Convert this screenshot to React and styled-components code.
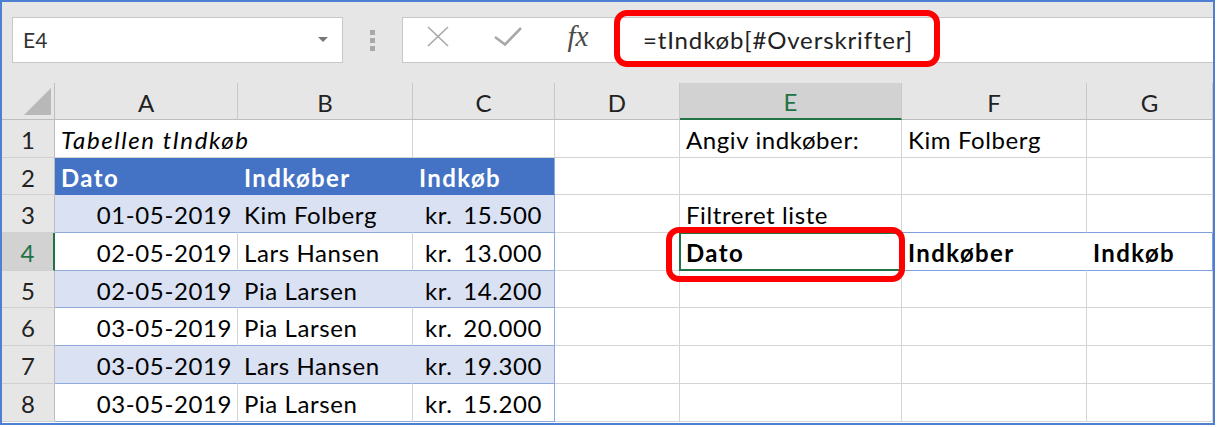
import React from 'react';
import styled, { createGlobalStyle } from 'styled-components';

const GlobalStyle = createGlobalStyle`
  html, body { margin: 0; padding: 0; background: #fff; }
  body { font-family: Lato, "Open Sans", sans-serif; }
`;

const Frame = styled.div`
  width: 1215px;
  height: 425px;
  box-sizing: border-box;
  border: 2px solid #4f7fd2;
  overflow: hidden;
  background: #fff;
  display: flex;
  flex-direction: column;
`;

const FormulaBar = styled.div`
  flex: none;
  height: 81px;
  box-sizing: border-box;
  background: #e6e6e6;
  display: flex;
  align-items: flex-start;
  padding: 15px 0 0 10px;
`;

const NameBox = styled.div`
  width: 331px;
  height: 46px;
  box-sizing: border-box;
  border: 1px solid #c8c8c8;
  background: #fff;
  display: flex;
  align-items: center;
  justify-content: space-between;
  padding: 0 14px 2px 10px;
  font-size: 21px;
  color: #333;
`;

const DropArrow = styled.span`
  width: 0;
  height: 0;
  border-left: 5px solid transparent;
  border-right: 5px solid transparent;
  border-top: 5px solid #777;
`;

const Grip = styled.div`
  width: 59px;
  display: flex;
  flex-direction: column;
  align-items: center;
  gap: 3px;
  padding-top: 13px;
`;

const GripDot = styled.span`
  width: 5px;
  height: 5px;
  background: #a8a8a8;
`;

const FormulaBox = styled.div`
  position: relative;
  flex: 1;
  height: 46px;
  box-sizing: border-box;
  border: 1px solid #c8c8c8;
  border-right: none;
  background: #fff;
  display: flex;
  align-items: center;
`;

const IconSlot = styled.div`
  width: 70px;
  height: 100%;
  display: flex;
  align-items: center;
  justify-content: center;
  padding-bottom: 8px;
  box-sizing: border-box;
`;

const Fx = styled.span`
  font-family: "Liberation Serif", serif;
  font-style: italic;
  font-size: 29px;
  color: #4a4a4a;
`;

const FormulaText = styled.span`
  margin-left: 30px;
  padding-bottom: 2px;
  font-size: 24px;
  letter-spacing: 0.85px;
  color: #222;
`;

const Callout = styled.span`
  position: absolute;
  left: ${p => p.$left}px;
  top: ${p => p.$top}px;
  width: ${p => p.$w}px;
  height: ${p => p.$h}px;
  box-sizing: border-box;
  border: 6px solid #ff0000;
  border-radius: 13px;
  pointer-events: none;
  z-index: 3;
`;

const Sheet = styled.div`
  display: grid;
  grid-template-columns: 53px 183px 175px 142px 125px 222px 185px 1fr;
  grid-template-rows: 37px repeat(8, 37.7px);
  font-size: 24px;
`;

const Corner = styled.div`
  background: #e6e6e6;
  border-right: 1px solid #bdbdbd;
  border-bottom: 1px solid #bdbdbd;
  display: flex;
  align-items: flex-end;
  justify-content: flex-end;
  padding: 0 3px 4px 0;
`;

const ColHead = styled.div`
  background: ${p => (p.$active ? '#d2d2d2' : '#e6e6e6')};
  color: ${p => (p.$active ? '#217346' : '#222')};
  border-right: 1px solid #c8c8c8;
  border-bottom: ${p => (p.$active ? '2px solid #217346' : '1px solid #bdbdbd')};
  box-sizing: border-box;
  display: flex;
  align-items: center;
  justify-content: center;
  padding-top: 2px;
`;

const RowHead = styled.div`
  background: ${p => (p.$active ? '#d2d2d2' : '#e6e6e6')};
  color: ${p => (p.$active ? '#217346' : '#222')};
  border-right: ${p => (p.$active ? '2px solid #217346' : '1px solid #bdbdbd')};
  border-bottom: 1px solid #d0d0d0;
  box-sizing: border-box;
  display: flex;
  align-items: center;
  justify-content: center;
  padding-top: 2px;
`;

const spacing = p => (p.$italic ? '1.6px' : p.$bold ? '1.4px' : '0.6px');

const Cell = styled.div`
  position: relative;
  grid-column: span ${p => p.$span || 1};
  box-sizing: border-box;
  display: flex;
  align-items: center;
  padding: 2px 6px 0 6px;
  white-space: nowrap;
  background: #fff;
  color: #000;
  font-weight: ${p => (p.$bold ? 700 : 400)};
  font-style: ${p => (p.$italic ? 'italic' : 'normal')};
  letter-spacing: ${spacing};
  border-right: 1px solid ${p => p.$right || '#d4d4d4'};
  border-bottom: 1px solid ${p => p.$bottom || '#d4d4d4'};
`;

const SelectedCell = styled(Cell)`
  &::after {
    content: '';
    position: absolute;
    left: -1px;
    top: -1px;
    right: 0;
    bottom: -1px;
    border: 2px solid #217346;
  }
`;

const TableCell = styled.div`
  box-sizing: border-box;
  display: flex;
  align-items: center;
  justify-content: ${p => (p.$align === 'right' ? 'flex-end' : p.$align === 'split' ? 'space-between' : 'flex-start')};
  padding: 2px ${p => (p.$align === 'split' ? 12 : 5)}px 0 ${p => (p.$align === 'split' ? 12 : 6)}px;
  white-space: nowrap;
  background: ${p => (p.$head ? '#4472c4' : p.$band ? '#d9e1f2' : '#fff')};
  color: ${p => (p.$head ? '#fff' : '#000')};
  font-weight: ${p => (p.$head ? 700 : 400)};
  letter-spacing: ${p => (p.$head ? '1.4px' : '0.6px')};
  border-bottom: 1px solid ${p => (p.$head ? '#4472c4' : '#8eaadb')};
  border-right: 1px solid
    ${p => (p.$last ? '#8eaadb' : p.$head ? '#4472c4' : p.$band ? '#d9e1f2' : '#d4d4d4')};
`;

const columns = ['A', 'B', 'C', 'D', 'E', 'F', 'G'];

const purchases = [
  ['01-05-2019', 'Kim Folberg', '15.500'],
  ['02-05-2019', 'Lars Hansen', '13.000'],
  ['02-05-2019', 'Pia Larsen', '14.200'],
  ['03-05-2019', 'Pia Larsen', '20.000'],
  ['03-05-2019', 'Lars Hansen', '19.300'],
  ['03-05-2019', 'Pia Larsen', '15.200'],
];

const CLOSE_BLUE = '#7f9fdc';

const rightSide = {
  1: ['', 'Angiv indkøber:', 'Kim Folberg', ''],
  2: ['', '', '', ''],
  3: ['', 'Filtreret liste', '', ''],
  4: ['', 'Dato', 'Indkøber', 'Indkøb'],
};

function SelectAll() {
  return (
    <svg width="27" height="27" viewBox="0 0 27 27">
      <polygon points="27,0 27,27 0,27" fill="#b8b8b8" />
    </svg>
  );
}

function CancelIcon() {
  return (
    <svg width="22" height="21" viewBox="0 0 22 21">
      <path d="M1 1 L21 20 M21 1 L1 20" stroke="#a8a8a8" strokeWidth="1.6" fill="none" />
    </svg>
  );
}

function EnterIcon() {
  return (
    <svg width="28" height="19" viewBox="0 0 28 19">
      <path d="M1 10 L11 17.5 L27 1" stroke="#a8a8a8" strokeWidth="2.6" fill="none" />
    </svg>
  );
}

function RightCells({ row }) {
  const values = rightSide[row] || ['', '', '', ''];
  return values.map((v, i) => {
    const col = i + 3;
    if (row === 4 && col === 4) {
      return (
        <SelectedCell key={col} $bold $bottom={CLOSE_BLUE}>
          {v}
          <Callout $left={-14} $top={-6} $w={239} $h={55} />
        </SelectedCell>
      );
    }
    let bottom;
    let right;
    if ((row === 3 || row === 4) && col >= 5) bottom = CLOSE_BLUE;
    if (row === 4 && col === 5) right = '#fff';
    if (row === 4 && col === 6) right = CLOSE_BLUE;
    return (
      <Cell key={col} $bold={row === 4} $bottom={bottom} $right={right}>
        {v}
      </Cell>
    );
  });
}

export default function App() {
  return (
    <>
      <GlobalStyle />
      <Frame>
        <FormulaBar>
          <NameBox>
            <span>E4</span>
            <DropArrow />
          </NameBox>
          <Grip>
            <GripDot />
            <GripDot />
            <GripDot />
          </Grip>
          <FormulaBox>
            <IconSlot><CancelIcon /></IconSlot>
            <IconSlot><EnterIcon /></IconSlot>
            <IconSlot><Fx>fx</Fx></IconSlot>
            <FormulaText>=tIndkøb[#Overskrifter]</FormulaText>
            <Callout $left={211} $top={-8} $w={326} $h={57} />
          </FormulaBox>
        </FormulaBar>

        <Sheet>
          <Corner><SelectAll /></Corner>
          {columns.map(c => (
            <ColHead key={c} $active={c === 'E'}>{c}</ColHead>
          ))}

          <RowHead>1</RowHead>
          <Cell $span={2} $italic>Tabellen tIndkøb</Cell>
          <Cell />
          <RightCells row={1} />

          <RowHead>2</RowHead>
          <TableCell $head>Dato</TableCell>
          <TableCell $head>Indkøber</TableCell>
          <TableCell $head $last>Indkøb</TableCell>
          <RightCells row={2} />

          {purchases.map(([date, buyer, amount], i) => {
            const row = i + 3;
            const band = i % 2 === 0;
            return (
              <React.Fragment key={row}>
                <RowHead $active={row === 4}>{row}</RowHead>
                <TableCell $band={band} $align="right">{date}</TableCell>
                <TableCell $band={band}>{buyer}</TableCell>
                <TableCell $band={band} $last $align="split">
                  <span>kr.</span>
                  <span>{amount}</span>
                </TableCell>
                <RightCells row={row} />
              </React.Fragment>
            );
          })}
        </Sheet>
      </Frame>
    </>
  );
}
